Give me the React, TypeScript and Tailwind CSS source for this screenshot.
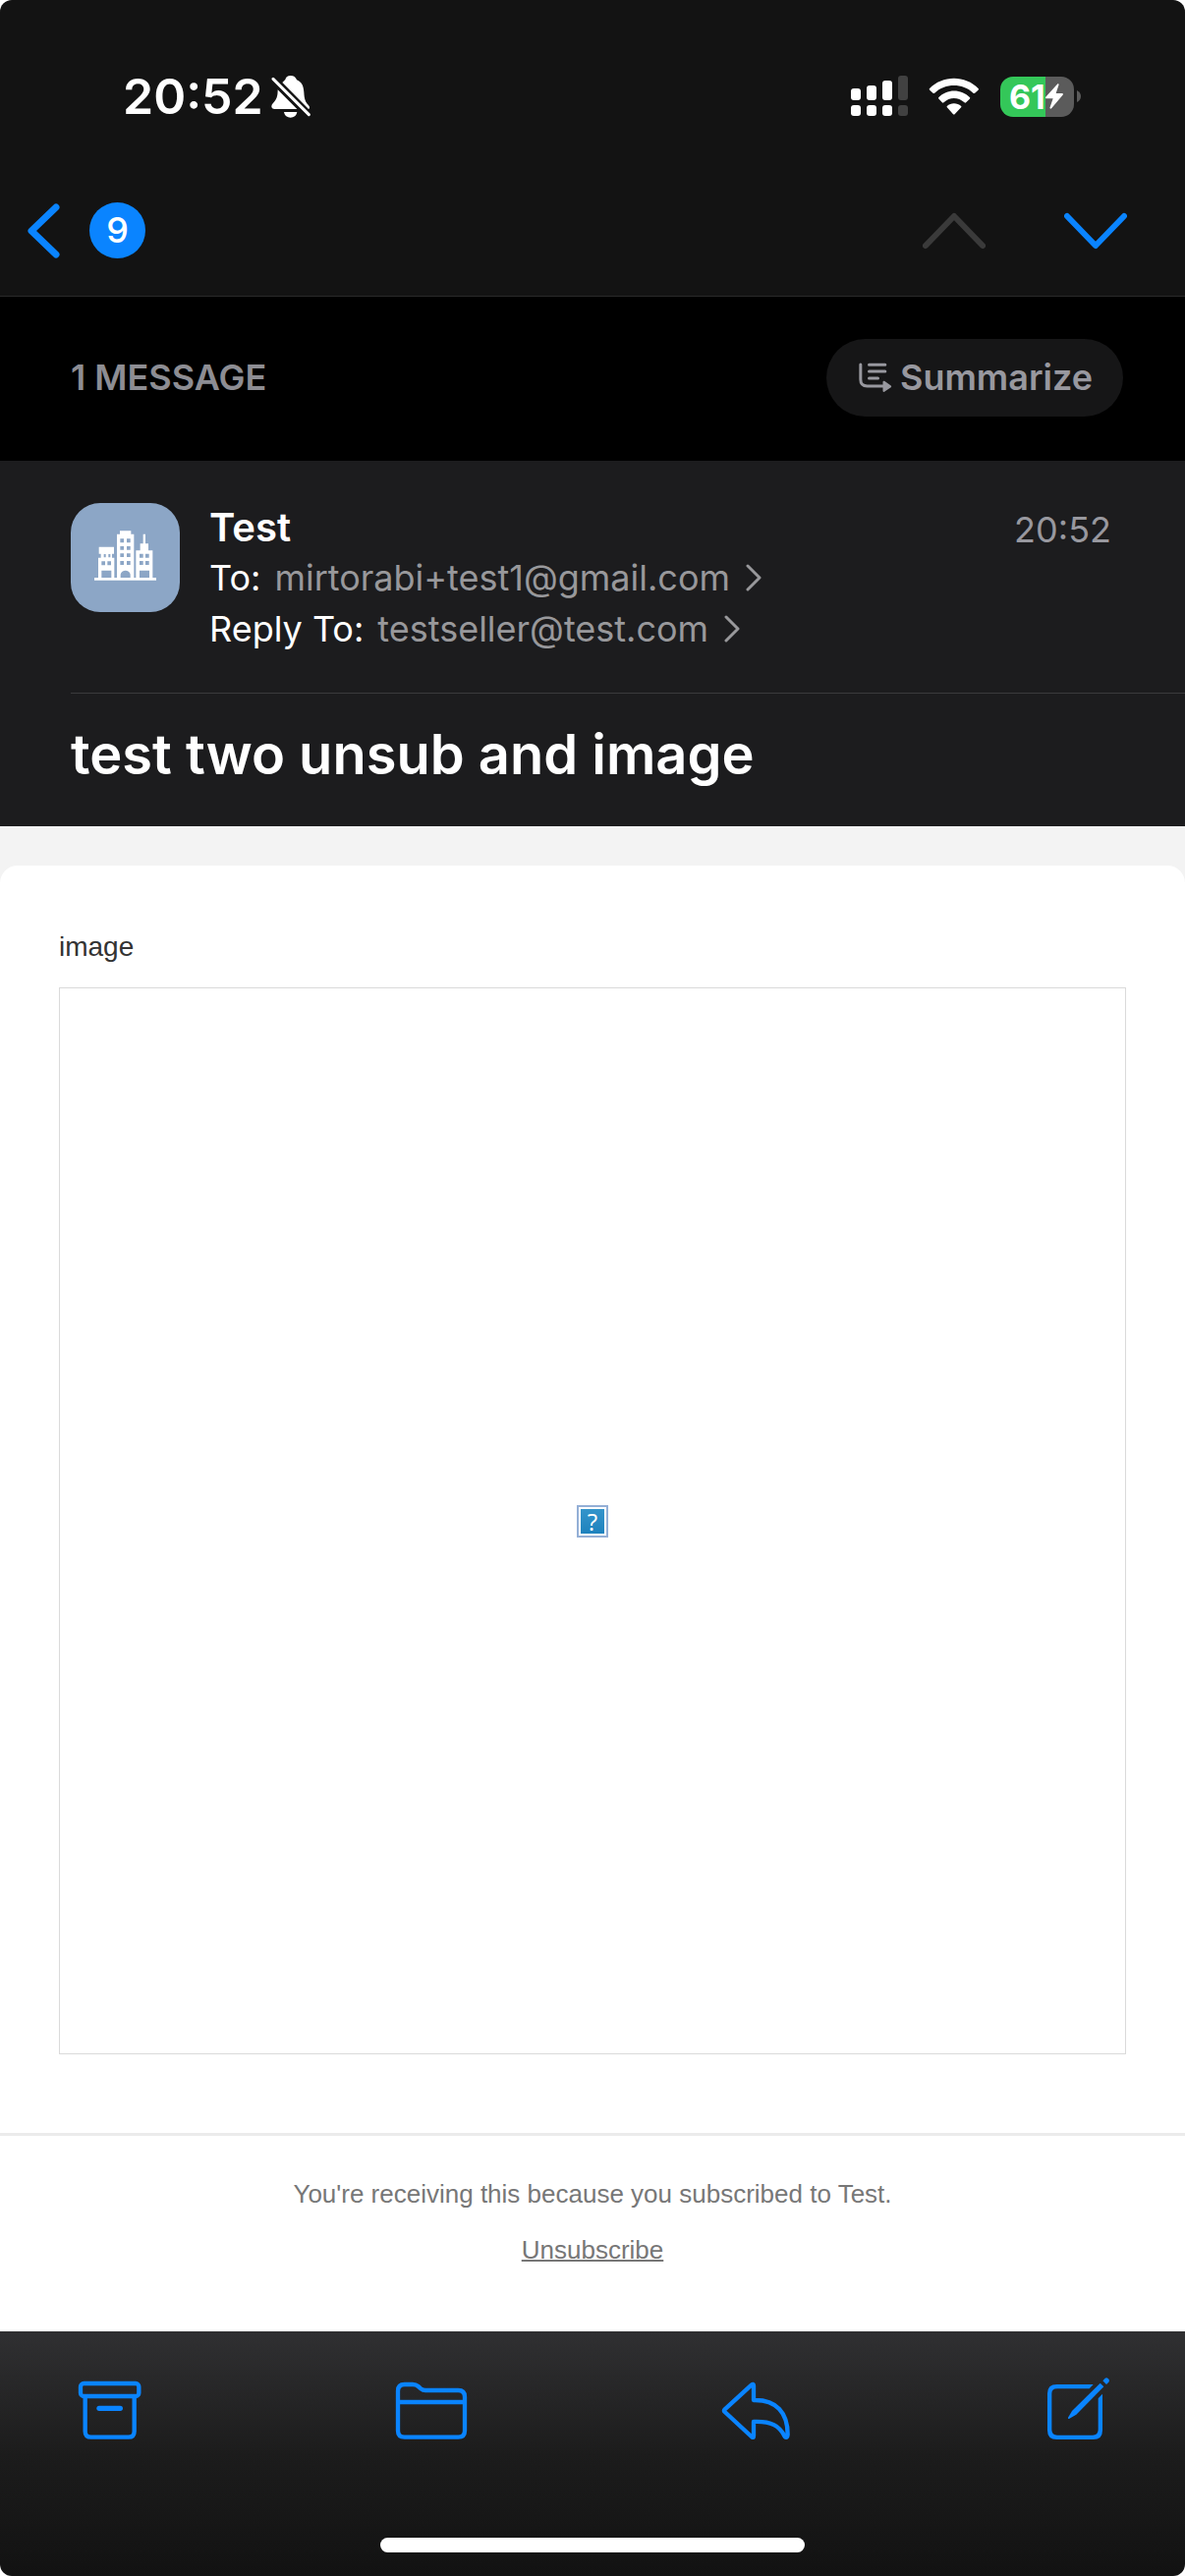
import React from "react";

const BellOff = () => (
  <svg className="h-[43px] w-[40px]" viewBox="832 231 120 129" fill="none">
    <path
      d="M891 231c10 0 16 4 19 13c17 7 21 21 22 38c1 22 5 30 13 38c6 6 5 11 1 13L866 252c4-4 7-7 9-9c2-8 7-12 16-12z"
      fill="white"
    />
    <path d="M852 274L911 333H843c-11 0-13-10-6-17c12-12 15-22 15-42z" fill="white" />
    <path d="M871 342H911c-2 11-10 17-20 17s-18-6-20-17z" fill="white" />
    <path d="M838 241L947 350" stroke="#131313" strokeWidth="17" />
    <path d="M838 241L947 350" stroke="white" strokeWidth="9" strokeLinecap="round" />
  </svg>
);

const Signal = () => (
  <svg className="h-[42px] w-[58px]" viewBox="0 0 58 42" fill="white">
    <rect x="0" y="13" width="10" height="12" rx="3" />
    <rect x="16" y="10" width="10" height="15" rx="3" />
    <rect x="32" y="5" width="10" height="20" rx="3" />
    <rect x="48" y="0" width="10" height="25" rx="3" fill="#414141" />
    <rect x="0" y="30" width="10" height="11" rx="3" />
    <rect x="16" y="30" width="10" height="11" rx="3" />
    <rect x="32" y="30" width="10" height="11" rx="3" />
    <rect x="48" y="30" width="10" height="11" rx="3" fill="#414141" />
  </svg>
);

const Wifi = () => (
  <svg className="h-[38px] w-[52px]" viewBox="375 115 153 114" fill="white">
    <path d="M376 149C416 107 486 107 526 149Q527 151 525 153L515 162Q512 164 510 162C478 131 424 131 392 162Q390 164 387 162L377 153Q375 151 376 149Z" />
    <path d="M404 176C430 149 473 149 500 176Q501 178 499 180L488 191Q486 193 483 191C464 174 438 174 420 191Q417 193 415 191L405 180Q403 178 404 176Z" />
    <path d="M430 202C441 191 461 191 473 202Q475 204 473 206L454 226Q451 229 448 226L430 206Q428 204 430 202Z" />
  </svg>
);

const Battery = () => (
  <div className="flex items-center gap-[3px]">
    <div className="flex h-[41px] w-[75px] items-center overflow-hidden rounded-[13px] bg-[linear-gradient(90deg,#34c759_0_61%,#5b5b5b_61%)] pl-[9px]">
      <span className="text-[34px] leading-[41px] font-bold">61</span>
      <svg className="h-[26px] w-[18px] shrink-0" viewBox="743 136 54 78" fill="white">
        <path d="M779 138C783 135 785 138 783 142L775 166H793C797 166 798 169 795 172L762 211C758 215 755 212 757 208L766 182H747C743 182 742 179 745 176Z" />
      </svg>
    </div>
    <svg className="h-[12px] w-[4px]" viewBox="0 0 4 12" fill="#5b5b5b">
      <path d="M0 0Q4 2 4 6T0 12Z" />
    </svg>
  </div>
);

const ChevronRight = () => (
  <svg className="h-[28px] w-[16px]" viewBox="0 0 16 28" fill="none" stroke="#98989b" strokeWidth="3" strokeLinecap="round" strokeLinejoin="round">
    <path d="M2 2L14 14L2 26" />
  </svg>
);

const City = () => (
  <svg className="h-[51px] w-[63px]" viewBox="108 115 189 153">
    <g fill="white">
      <path d="M108 259H297V267H108Z" />
      <path d="M122 165H168V186H162V198H169V260H120V198H128V186H122Z" />
      <path d="M186 116H220V126H229V260H177V126H186Z" />
      <path d="M257 126H264V155H273V176H286V260H235V176H248V155H257Z" />
    </g>
    <g fill="#8ca6c6">
      <path d="M137 187h6v10h-6zM151 187h6v10h-6zM130 209h11v12h-11zM148 209h11v12h-11zM130 237H160V259H130z" />
      <path d="M187 140h11v12h-11zM207 140h11v12h-11zM187 163h11v11h-11zM207 163h11v11h-11zM187 185h11v11h-11zM207 185h11v11h-11zM187 208h11v12h-11zM207 208h11v12h-11z" />
      <path d="M188 259V249C191 233 215 233 218 249V259z" />
      <path d="M246 186h11v12h-11zM264 186h11v12h-11zM246 208h11v12h-11zM264 208h11v12h-11zM246 237H276V259H246z" />
    </g>
  </svg>
);

const SummarizeIcon = () => (
  <svg className="h-[31px] w-[34px]" viewBox="41 92 101 93" fill="none" stroke="#98989f" strokeWidth="9" strokeLinecap="round" strokeLinejoin="round">
    <path d="M46 98V144Q46 164 66 164H116" />
    <path d="M72 99H121M72 119H121M72 140H99" />
    <path d="M117 151L137 165L117 179Z" fill="#98989f" strokeWidth="6" />
  </svg>
);

const Archive = () => (
  <svg className="h-[66px] w-[66px]" viewBox="88 81 198 198" fill="none" stroke="#0a84ff" strokeWidth="13" strokeLinejoin="round">
    <rect x="97" y="108" width="178" height="39" rx="10" />
    <path d="M111 150V254Q111 272 129 272H243Q261 272 261 254V150" />
    <path d="M154 184H218" strokeWidth="16" strokeLinecap="round" />
  </svg>
);

const Folder = () => (
  <svg className="h-[66px] w-[74px]" viewBox="1059 81 222 198" fill="none" stroke="#0a84ff" strokeWidth="13" strokeLinejoin="round">
    <path d="M1068 131Q1068 111 1088 111H1113Q1123 111 1130 117L1138 124Q1144 129 1152 129H1252Q1272 129 1272 149V252Q1272 272 1252 272H1088Q1068 272 1068 252Z" />
    <path d="M1068 165H1272" />
  </svg>
);

const Reply = () => (
  <svg className="h-[66px] w-[70px]" viewBox="99 81 210 198" fill="none" stroke="#0a84ff" strokeWidth="13" strokeLinejoin="round">
    <path d="M191 113Q198 107 198 115V159C268 157 302 198 302 264Q301 277 293 270C277 237 252 223 198 225V268Q198 277 191 270L110 195Q106 191 110 187Z" />
  </svg>
);

const Compose = () => (
  <svg className="h-[66px] w-[70px]" viewBox="1083 81 210 198" fill="#0a84ff">
    <path d="M1238 111L1226 124H1128Q1111 124 1111 139V249Q1111 266 1128 266H1236Q1253 266 1253 249V154L1266 140V251Q1266 279 1238 279H1126Q1098 279 1098 251V139Q1098 111 1126 111Z" />
    <path d="M1259 107L1270 118L1186 203L1164 216Q1160 217 1161 212L1173 192Z" />
    <path d="M1267 100L1274 92Q1279 89 1283 93L1286 96Q1288 100 1285 104L1278 111Z" />
  </svg>
);

const MissingImage = () => (
  <div role="img" aria-label="Missing image" className="border-2 border-[#94afd6] bg-white p-[2px]">
    <div className="flex h-[25px] w-[24px] items-center justify-center bg-gradient-to-b from-[#3494cb] to-[#1d82bd] font-['Open_Sans',sans-serif] text-[24px] leading-[25px] font-medium text-white">
      ?
    </div>
  </div>
);

const recipients = [
  { label: "To:", address: "mirtorabi+test1@gmail.com" },
  { label: "Reply To:", address: "testseller@test.com" },
];

const tools = [
  { label: "Archive", icon: <Archive /> },
  { label: "Move to folder", icon: <Folder /> },
  { label: "Reply", icon: <Reply /> },
  { label: "Compose", icon: <Compose /> },
];

export default function App() {
  return (
    <div className="min-h-screen bg-white">
      <div className="flex min-h-screen flex-col overflow-hidden rounded-[12px] bg-white font-[Inter,sans-serif] text-white">
        <header className="border-b border-[#2a2a2a] bg-[#131313]">
          <div className="flex items-center justify-between pt-16 pr-[106px] pb-9 pl-[125px]">
            <div className="flex items-center gap-2">
              <span className="text-[50px] leading-[68px] font-semibold">20:52</span>
              <BellOff />
            </div>
            <div className="flex items-center gap-[21px]">
              <Signal />
              <Wifi />
              <Battery />
            </div>
          </div>
          <nav className="flex h-[133px] items-center justify-between pr-[59px] pl-[27px]">
            <button aria-label="Back, 9 unread" className="flex items-center gap-[29px]">
              <svg className="h-[58px] w-[35px]" viewBox="0 0 35 58" fill="none" stroke="#0a84ff" strokeWidth="7" strokeLinecap="round" strokeLinejoin="round">
                <path d="M30 5L5 29L30 53" />
              </svg>
              <span className="flex size-[57px] items-center justify-center rounded-full bg-[#0a84ff] text-[36px] leading-[57px] font-medium">9</span>
            </button>
            <div className="flex items-center gap-20">
              <button aria-label="Previous message" disabled>
                <svg className="h-[38px] w-[64px]" viewBox="0 0 64 38" fill="none" stroke="#3a3a3a" strokeWidth="6" strokeLinecap="round" strokeLinejoin="round">
                  <path d="M3 34L32 4L61 34" />
                </svg>
              </button>
              <button aria-label="Next message">
                <svg className="h-[38px] w-[64px]" viewBox="0 0 64 38" fill="none" stroke="#0a84ff" strokeWidth="6" strokeLinecap="round" strokeLinejoin="round">
                  <path d="M3 4L32 34L61 4" />
                </svg>
              </button>
            </div>
          </nav>
        </header>

        <section className="flex items-start justify-between bg-black pt-[43px] pr-[63px] pb-[45px] pl-[72px]">
          <h2 className="text-[36px] leading-[79px] font-semibold text-[#8d8d93]">1 MESSAGE</h2>
          <button className="flex items-center gap-2 rounded-full bg-[#161617] pr-[31px] pl-[33px] text-[36px] leading-[79px] font-semibold text-[#98989f]">
            <SummarizeIcon />
            Summarize
          </button>
        </section>

        <section className="bg-[#1c1c1e] pl-[72px]">
          <div className="flex items-start gap-[30px] pt-[43px] pr-[75px] pb-[39px]">
            <div className="flex size-[111px] shrink-0 items-center justify-center rounded-[30px] bg-[#8ca6c6] pb-[4px]">
              <City />
            </div>
            <div className="flex-1">
              <h3 className="text-[40px] leading-[50px] font-semibold">Test</h3>
              {recipients.map((r) => (
                <p key={r.label} className="flex items-center gap-[14px] text-[36px] leading-[52px]">
                  <span>{r.label}</span>
                  <a href={"mailto:" + r.address} className="flex items-center gap-4 text-[#98989b]">
                    {r.address}
                    <ChevronRight />
                  </a>
                </p>
              ))}
            </div>
            <time className="text-[36px] leading-[54px] text-[#98989f]">20:52</time>
          </div>
          <h1 className="border-t border-[#3a3a3c] pt-[26px] pb-[37px] text-[56px] leading-[72px] font-semibold">test two unsub and image</h1>
        </section>

        <main className="flex-1 bg-[#f3f3f3] pt-10 font-['Liberation_Sans',Arial,sans-serif]">
          <article className="h-full rounded-t-[18px] bg-white pt-[62px]">
            <div className="px-[60px]">
              <p className="text-[28px] leading-[42px] text-[#333333]">image</p>
              <div className="mt-5 flex aspect-square items-center justify-center border border-[#dadada]">
                <MissingImage />
              </div>
            </div>
            <footer className="mt-20 flex flex-col items-center gap-[19px] border-t-[3px] border-[#ebebeb] pt-10 pb-16 text-[26px] leading-[38px] text-[#777777]">
              <p>You're receiving this because you subscribed to Test.</p>
              <a href="#unsubscribe" className="underline decoration-2">Unsubscribe</a>
            </footer>
          </article>
        </main>

        <footer className="flex flex-col items-center bg-[linear-gradient(180deg,#303032_0%,#1c1c1c_50%,#121212_100%)] pt-11 pb-6">
          <div className="flex w-full items-center justify-between pr-[75px] pl-[79px]">
            {tools.map((t) => (
              <button key={t.label} aria-label={t.label}>
                {t.icon}
              </button>
            ))}
          </div>
          <div className="mt-[100px] h-[15px] w-[432px] rounded-full bg-white" />
        </footer>
      </div>
    </div>
  );
}
